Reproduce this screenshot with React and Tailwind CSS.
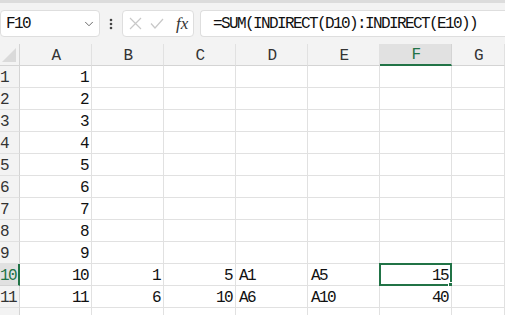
import { ChevronDown } from 'lucide-react';

const cols = ['A', 'B', 'C', 'D', 'E', 'F', 'G'];

const data = {
  10: { A: '10', B: '1', C: '5', D: 'A1', E: 'A5', F: '15' },
  11: { A: '11', B: '6', C: '10', D: 'A6', E: 'A10', F: '40' },
};

const leftCols = ['D', 'E'];

function Cell({ row, col }) {
  let value = '';
  if (data[row]) value = data[row][col] || '';
  else if (col === 'A' && row <= 9) value = String(row);
  const selected = row === 10 && col === 'F';
  const align = leftCols.includes(col) ? 'justify-start pl-[3px]' : 'justify-end pr-[3px]';
  return (
    <div className={`relative flex items-center h-[22px] border-r border-b border-[#e1e1e1] bg-white text-[#111] ${align}`}>
      <span className="pt-[2px]">{value}</span>
      {selected && (
        <>
          <div className="absolute -left-[1px] -top-[1px] -right-[1px] -bottom-[1px] border-2 border-[#217346]" />
          <div className="absolute -right-[4px] -bottom-[4px] w-[5px] h-[5px] bg-[#217346] border border-white box-content" />
        </>
      )}
    </div>
  );
}

export default function App() {
  const rows = Array.from({ length: 12 }, (_, i) => i + 1);

  return (
    <div
      className="w-[505px] h-[315px] overflow-hidden bg-white text-[16px] tracking-[-1.6px]"
      style={{ fontFamily: '"Liberation Mono", "Noto Sans CJK SC", monospace' }}
    >
      {/* Toolbar */}
      <div className="h-[44px] bg-[#f3f3f3] border-t-[3px] border-[#dcdcdc] pt-[7px] flex items-start">
        <div className="w-[100px] h-[27px] bg-white border border-[#dedede] rounded-[4px] flex items-center pl-[5px] pr-[3px]">
          <span className="flex-1 text-[#111]">F10</span>
          <ChevronDown className="w-[14px] h-[14px] text-[#555]" strokeWidth={1.5} />
        </div>
        <div className="w-[22px] h-[27px] flex items-center justify-center">
          <svg width="4" height="12" viewBox="0 0 4 12">
            <circle cx="2" cy="2" r="1.3" fill="#444" />
            <circle cx="2" cy="6" r="1.3" fill="#444" />
            <circle cx="2" cy="10" r="1.3" fill="#444" />
          </svg>
        </div>
        <div className="w-[72px] h-[27px] bg-white border border-[#dedede] rounded-[4px] flex items-center pl-[6px] gap-[8px]">
          <svg width="13" height="13" viewBox="0 0 13 13">
            <path d="M1 1 L12 12 M12 1 L1 12" stroke="#c8c8c8" strokeWidth="1.2" fill="none" />
          </svg>
          <svg width="14" height="11" viewBox="0 0 14 11">
            <path d="M1 5.5 L5 10 L13 1" stroke="#c8c8c8" strokeWidth="1.2" fill="none" />
          </svg>
          <span
            className="ml-[4px] italic text-[17px] tracking-normal text-[#333]"
            style={{ fontFamily: '"Liberation Serif", serif' }}
          >
            fx
          </span>
        </div>
        <div className="ml-[6px] flex-1 h-[27px] bg-white border border-r-0 border-[#dedede] rounded-l-[4px] flex items-center pl-[12px] text-[#111] whitespace-nowrap">
          =SUM(INDIRECT(D10):INDIRECT(E10))
        </div>
      </div>

      {/* Grid */}
      <div className="grid grid-cols-[20px_72px_72px_72px_72px_72px_72px_1fr]">
        <div className="h-[22px] bg-[#f3f3f3] border-r border-b border-[#d4d4d4] flex items-end justify-end pr-[3px] pb-[3px]">
          <svg width="14" height="14" viewBox="0 0 14 14">
            <path d="M14 0 L14 14 L0 14 Z" fill="#dadada" />
          </svg>
        </div>
        {cols.map((c) => (
          <div
            key={c}
            className={
              c === 'F'
                ? 'h-[22px] bg-[#e1e1e1] border-r border-[#d4d4d4] border-b-2 border-b-[#217346] flex items-center justify-center text-[#217346] pt-[2px]'
                : 'h-[22px] bg-[#f3f3f3] border-r border-b border-[#e1e1e1] border-b-[#d4d4d4] flex items-center justify-center text-[#333] pt-[2px]'
            }
          >
            {c}
          </div>
        ))}
        {rows.map((r) => (
          <div key={r} className="contents">
            <div
              className={
                r === 10
                  ? 'h-[22px] bg-[#e1e1e1] border-r-2 border-[#217346] border-b border-b-[#d4d4d4] flex items-center pt-[2px] text-[#217346] overflow-hidden'
                  : 'h-[22px] bg-[#f3f3f3] border-r border-b border-[#d4d4d4] border-b-[#e1e1e1] flex items-center pt-[2px] text-[#333] overflow-hidden'
              }
            >
              {r <= 11 ? r : ''}
            </div>
            {cols.map((c) => (
              <Cell key={c} row={r} col={c} />
            ))}
          </div>
        ))}
      </div>
    </div>
  );
}
